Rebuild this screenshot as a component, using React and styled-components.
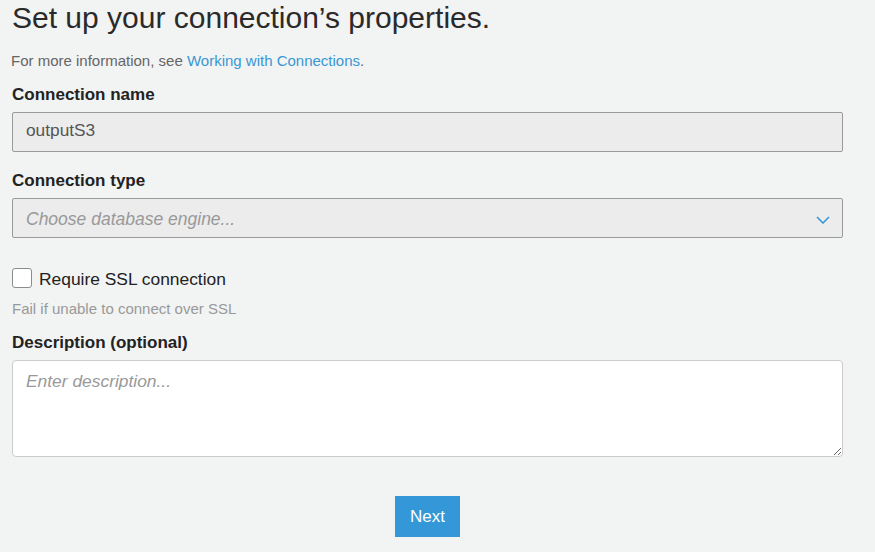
import React from "react";
import styled, { createGlobalStyle } from "styled-components";

const GlobalStyle = createGlobalStyle`
  html, body {
    margin: 0;
    padding: 0;
    background: #f2f3f3;
  }
  body {
    font-family: "Liberation Sans", Arial, sans-serif;
    color: #333;
  }
`;

const Page = styled.div`
  padding: 0 32px 16px 12px;
`;

const Title = styled.h1`
  margin: 0;
  font-size: 30px;
  line-height: 36px;
  font-weight: 400;
  color: #2a2a2a;
`;

const Info = styled.p`
  margin: 15px 0 0 -1px;
  font-size: 15px;
  line-height: 20px;
  color: #666;
`;

const Link = styled.a`
  color: #3a97d4;
  text-decoration: none;
`;

const Label = styled.label`
  display: block;
  margin-top: ${(p) => p.$top || 19}px;
  margin-bottom: 7px;
  font-size: 17px;
  line-height: 20px;
  font-weight: 700;
  color: #222;
`;

const TextInput = styled.input`
  display: block;
  box-sizing: border-box;
  width: 100%;
  height: 40px;
  margin: 0;
  padding: 0 13px 3px;
  border: 1px solid #999;
  border-radius: 2px;
  background: #ececec;
  font-family: inherit;
  font-size: 17.3px;
  color: #555;
  outline: none;
`;

const Select = styled.div`
  display: flex;
  align-items: center;
  justify-content: space-between;
  box-sizing: border-box;
  height: 40px;
  padding: 3px 12px 0 13px;
  border: 1px solid #999;
  border-radius: 2px;
  background: #ececec;
  cursor: pointer;
`;

const Placeholder = styled.span`
  font-size: 17.5px;
  font-style: italic;
  color: #999;
`;

const CheckRow = styled.label`
  display: flex;
  align-items: flex-start;
  gap: 7px;
  margin-top: 30px;
  height: 20px;
  cursor: pointer;
`;

const Box = styled.span`
  flex: none;
  box-sizing: border-box;
  width: 20px;
  height: 20px;
  border: 1px solid #8c8c8c;
  border-radius: 3px;
  background: #fff;
`;

const CheckText = styled.span`
  font-size: 17.4px;
  line-height: 20px;
  margin-top: 1px;
  color: #222;
`;

const Hint = styled.div`
  margin-top: 11px;
  font-size: 15px;
  line-height: 20px;
  color: #999;
`;

const TextArea = styled.textarea`
  display: block;
  box-sizing: border-box;
  width: 100%;
  height: 97px;
  margin: 0;
  padding: 10px 13px;
  border: 1px solid #ccc;
  border-radius: 4px;
  background: #fff;
  font-family: inherit;
  font-size: 17.4px;
  color: #333;
  outline: none;

  &::placeholder {
    font-style: italic;
    color: #999;
  }
`;

const Actions = styled.div`
  display: flex;
  justify-content: center;
  margin-top: 39px;
`;

const Button = styled.button`
  height: 41px;
  padding: 0 15px;
  border: none;
  background: #3498d8;
  color: #fff;
  font-family: inherit;
  font-size: 17px;
  cursor: pointer;
`;

const Chevron = () => (
  <svg width="14" height="8" viewBox="0 0 14 8" fill="none">
    <polyline points="1,1 7,7 13,1" stroke="#3a97d4" strokeWidth="1.6" />
  </svg>
);

const App = () => {
  return (
    <Page>
      <GlobalStyle />
      <Title>Set up your connection’s properties.</Title>
      <Info>
        For more information, see <Link href="#">Working with Connections</Link>.
      </Info>

      <Label $top={14}>Connection name</Label>
      <TextInput defaultValue="outputS3" readOnly />

      <Label>Connection type</Label>
      <Select>
        <Placeholder>Choose database engine...</Placeholder>
        <Chevron />
      </Select>

      <CheckRow>
        <Box />
        <CheckText>Require SSL connection</CheckText>
      </CheckRow>
      <Hint>Fail if unable to connect over SSL</Hint>

      <Label $top={14}>Description (optional)</Label>
      <TextArea placeholder="Enter description..." />

      <Actions>
        <Button>Next</Button>
      </Actions>
    </Page>
  );
};

export default App;
